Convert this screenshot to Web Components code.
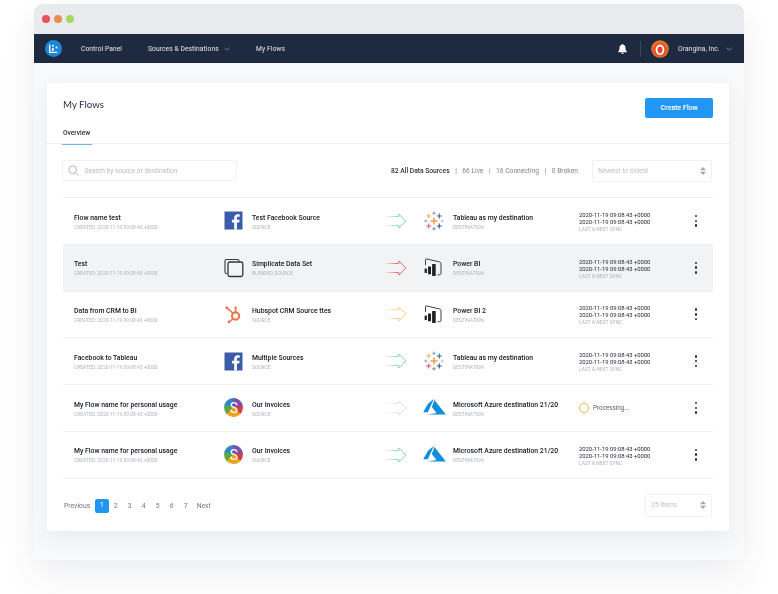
<!DOCTYPE html>
<html lang="en"><head><meta charset="utf-8"><title>My Flows</title>
<style>
html,body{margin:0;padding:0;background:#fff;height:594px;overflow:hidden}
body{font-family:Roboto,"Liberation Sans",sans-serif;color:#1d2433}
</style></head><body>
<app-window>
  <nav-bar slot="nav"></nav-bar>
  <flows-card>
    <flow-row name="Flow name test" src="fb" srcname="Test Facebook Source" srctype="SOURCE" arrow="#7fd3b4" dst="tableau" dstname="Tableau as my destination"></flow-row>
    <flow-row active name="Test" src="stack" srcname="Simplicate Data Set" srctype="BLENDED SOURCE" arrow="#e0636a" dst="pbi" dstname="Power BI"></flow-row>
    <flow-row name="Data from CRM to BI" src="hubspot" srcname="Hubspot CRM Source ttes" srctype="SOURCE" arrow="#f4cd85" dst="pbi" dstname="Power BI 2"></flow-row>
    <flow-row name="Facebook to Tableau" src="fb" srcname="Multiple Sources" srctype="SOURCE" arrow="#7fd3b4" dst="tableau" dstname="Tableau as my destination"></flow-row>
    <flow-row processing name="My Flow name for personal usage" src="simplicate" srcname="Our Invoices" srctype="SOURCE" arrow="#dcdfe3" dst="azure" dstname="Microsoft Azure destination 21/20"></flow-row>
    <flow-row name="My Flow name for personal usage" src="simplicate" srcname="Our Invoices" srctype="SOURCE" arrow="#7fd3b4" dst="azure" dstname="Microsoft Azure destination 21/20"></flow-row>
  </flows-card>
</app-window>
<script>
const ICONS={
fb:`<svg width="19" height="19" viewBox="0 0 19 19"><rect width="18" height="18" x=".5" y=".5" fill="#3b5ca8"/><path fill="#fff" d="M12.900 18.500v-7h2.300l.4-2.700h-2.700V7.100c0-.8.3-1.300 1.400-1.300h1.400V3.400c-.3 0-1.100-.1-2-.1-2.100 0-3.500 1.200-3.500 3.500v2H7.900v2.700h2.300v7z"/></svg>`,
stack:`<svg width="20" height="20" viewBox="0 0 20 20" fill="none" stroke="#33363c" stroke-width="1.100"><path d="M3 15.500H2.600A1.600 1.600 0 0 1 1 13.900V3.100A1.600 1.600 0 0 1 2.600 1.500H13.400A1.600 1.600 0 0 1 15 3.100V4"/><rect x="4" y="4" width="14.800" height="14.500" rx="1.800" stroke-width="1.300"/></svg>`,
hubspot:`<svg width="19" height="19" viewBox="0 0 19 19" fill="none" stroke="#ef7453"><circle cx="11.600" cy="11" r="3.600" stroke-width="2.100"/><path d="M11.600 7V3.500M9 8.300 3.600 3.400M9 13.800 5.600 16.500" stroke-width="1.500"/><circle cx="2.800" cy="2.800" r="1.500" fill="#ef7453" stroke="none"/><circle cx="11.600" cy="2.800" r="1.300" fill="#ef7453" stroke="none"/><circle cx="5" cy="17" r="1.400" fill="#ef7453" stroke="none"/></svg>`,
simplicate:`<div class="simp"><svg width="20" height="20" viewBox="0 0 20 20"><text x="10" y="15" text-anchor="middle" font-family="Roboto,sans-serif" font-size="14" fill="#fff">S</text></svg></div>`,
tableau:`<svg style="margin-left:1px" width="20" height="20" viewBox="0 0 20 20" fill="none" stroke-width="1.100">
<path stroke="#f19e4a" d="M10 6.500v7M6.500 10h7" stroke-width="1.500"/>
<path stroke="#f2b463" d="M4.700 2.500v5M2.200 5h5"/><path stroke="#8fa6c4" d="M10 0.500v3.500M8.250 2.250h3.500"/><path stroke="#3f6c93" d="M15.300 2.500v5M12.800 5h5"/>
<path stroke="#8aa9c9" d="M1.800 8.500v3M.3 10h3"/><path stroke="#b7c7d8" d="M18.200 8.500v3M16.700 10h3"/>
<path stroke="#e0596b" d="M4.700 12.500v5M2.200 15h5"/><path stroke="#7d8fa8" d="M10 16v3.500M8.250 17.750h3.500"/><path stroke="#2c5a8a" d="M15.300 12.500v5M12.800 15h5"/></svg>`,
pbi:`<svg style="margin-left:1px" width="19" height="19" viewBox="0 0 19 19" fill="none"><path d="M1.500 7V1.800Q1.500.6 2.700.9L15.700 4Q17 4.400 17 5.600V15.200Q17 16.800 15.300 16.800H13.500" stroke="#2b2d31" stroke-width=".9"/><rect x=".6" y="10.500" width="2.300" height="4.500" rx=".4" fill="#1f2125"/><rect x="4" y="8.500" width="3" height="7.800" rx=".4" fill="#1f2125"/><rect x="8.100" y="6" width="3.600" height="12" rx=".5" fill="#1f2125"/></svg>`,
azure:`<svg width="23" height="19" viewBox="0 0 23 19"><path fill="#0f8fdb" d="M11 .8 5 5.800.2 14.300H4.800zM11.500 2 8.800 8.900l4.700 6L4.400 16.500H22.800z"/></svg>`
};
const tpl=(html)=>{const t=document.createElement('template');t.innerHTML=html;return t};
class Base extends HTMLElement{
  mount(t){this.attachShadow({mode:'open'}).appendChild(t.content.cloneNode(true))}
}
const winT=tpl(`<style>
:host{display:block;width:710px;height:556px;margin:4px 0 0 34px;background:#f8f9fa;border-radius:9px 9px 0 0;box-shadow:0 18px 36px rgba(40,55,80,.07),0 0 30px rgba(40,55,80,.035);filter:blur(.3px)}
.bar{height:30px;background:#e9eaed;border-radius:9px 9px 0 0;display:flex;align-items:center;gap:3.500px;padding-left:7.500px;box-sizing:border-box}
.d{width:8.500px;height:8.500px;border-radius:50%}
main{display:block;padding:20px 15px 0 13px}
</style><div class="bar"><span class="d" style="background:#e9505a"></span><span class="d" style="background:#e8914f"></span><span class="d" style="background:#a7da5c"></span></div>
<slot name="nav"></slot><main><slot></slot></main>`);
customElements.define('app-window',class extends Base{constructor(){super();this.mount(winT)}});

const navT=tpl(`<style>
:host{display:flex;align-items:center;height:29px;background:#1d2a3f;color:#e6e9ee;font:400 6.700px Roboto,sans-serif;letter-spacing:.08px}
span.a,span.b,span.c,span.org{will-change:transform}
.logo{margin-left:11px;width:17px;height:17px;flex:none}
.a{margin-left:19px}.b{margin-left:26px}.c{margin-left:26px}
.chev{margin-left:5px;flex:none}
.right{margin-left:auto;display:flex;align-items:center}
.bell{flex:none;margin-right:13px}
.sep{width:1px;height:16px;background:#3d4759;margin-right:10px}
.av{width:18px;height:18px;flex:none;margin-right:9px}
.org{margin-right:0}.last{margin:0 12px 0 6px}
</style>
<svg class="logo" viewBox="0 0 17 17"><circle cx="8.500" cy="8.500" r="8.500" fill="#1d86d8"/><path d="M4.700 4.500v7.800h7.500" fill="none" stroke="#fff" stroke-width="1.300"/><rect x="6.800" y="8.200" width="2" height="2.500" fill="#fff"/><circle cx="8" cy="5.800" r="1" fill="#fff"/><circle cx="11.500" cy="7.500" r="1" fill="#fff"/></svg>
<span class="a">Control Panel</span><span class="b">Sources &amp; Destinations</span>
<svg class="chev" width="6" height="4" viewBox="0 0 6 4"><path d="M.5.700 3 3.200 5.500.700" fill="none" stroke="#9aa3b2" stroke-width=".7"/></svg>
<span class="c">My Flows</span>
<div class="right">
<svg class="bell" width="9" height="10" viewBox="0 0 9 10"><path fill="#fff" d="M4.500 0C5 0 5.300.300 5.300.8 6.800 1.200 7.500 2.300 7.500 3.800c0 2 .4 3 1.300 3.700v.8H.2v-.8c.9-.7 1.300-1.700 1.300-3.700C1.500 2.300 2.200 1.200 3.700.8 3.700.3 4 0 4.500 0zM3.200 8.800h2.600c0 .7-.6 1.200-1.300 1.200s-1.300-.5-1.300-1.200z"/></svg>
<span class="sep"></span>
<svg class="av" viewBox="0 0 18 18"><defs><radialGradient id="g" cx=".5" cy=".55" r=".55"><stop offset=".5" stop-color="#e2452a"/><stop offset="1" stop-color="#e58a1f"/></radialGradient></defs><circle cx="9" cy="9" r="8.800" fill="url(#g)"/><ellipse cx="9" cy="9.800" rx="3.500" ry="4.300" fill="none" stroke="#fff" stroke-width="1.800"/></svg>
<span class="org">Orangina, Inc.</span>
<svg class="chev last" width="6" height="4" viewBox="0 0 6 4"><path d="M.5.700 3 3.200 5.500.700" fill="none" stroke="#9aa3b2" stroke-width=".7"/></svg>
</div>`);
customElements.define('nav-bar',class extends Base{constructor(){super();this.mount(navT)}});

const cardT=tpl(`<style>
:host{display:block;height:448px;background:#fff;border-radius:2px;box-shadow:0 8px 22px rgba(40,55,80,.07);font-family:Roboto,sans-serif}
header{height:61px;box-sizing:border-box;border-bottom:1px solid #eef0f2;padding:15px 16px 0;position:relative;display:flex;justify-content:space-between;align-items:flex-start}
h1{margin:0;font:400 9.700px/13px Lato,Roboto,sans-serif;color:#2a3040;will-change:transform}
button{all:unset;box-sizing:border-box;width:68px;height:20px;background:#2196f3;border-radius:2px;color:#fff;font:500 6.800px/20px Roboto,sans-serif;text-align:center;letter-spacing:.1px}
.tab{position:absolute;left:15px;bottom:-1px;width:30px;height:15.500px;box-sizing:border-box;border-bottom:1.500px solid #6db3ee;font:500 6.600px/8px Roboto,sans-serif;color:#2a3040;padding-left:1px;will-change:transform}
.tools{display:flex;align-items:center;height:53px;padding:0 17px 0 15px;box-sizing:border-box}
.search{width:175px;height:21px;box-sizing:border-box;border:1px solid #eff1f3;border-radius:2px;display:flex;align-items:center;padding-left:5px;gap:5.500px;color:#b6bbc3;font-size:6.650px}
.stats{margin-left:auto;display:flex;gap:5.500px;font-size:6.700px;color:#7e8590;will-change:transform}
.stats b{font-weight:500;color:#2a3040}
.sel{box-sizing:border-box;border:1px solid #eff1f3;border-radius:2px;display:flex;align-items:center;justify-content:space-between;color:#bdc1c8;font-size:6.700px;padding:0 5px}
.s1{width:120px;height:22px;margin-left:14px}
.list{margin:0 16px;border-top:1px solid #eef0f2}
.pg{display:flex;align-items:center;justify-content:space-between;height:54px;padding:0 17px}
.pages{display:flex;align-items:center;color:#6f7682;font-size:6.800px;will-change:transform}
.pages span{width:14px;text-align:center}
.pages .w{width:auto;}
.pages .on{width:13.500px;height:13.500px;line-height:13.500px;background:#2196f3;color:#fff;border-radius:2px;margin:0 0 0 5px;}
.s2{width:67px;height:23px;margin-top:-1px}
</style>
<header><h1>My Flows</h1><button>Create Flow</button><div class="tab">Overview</div></header>
<div class="tools">
<div class="search"><svg width="11" height="11" viewBox="0 0 11 11" fill="none" stroke="#9ea4ad" stroke-width=".8"><circle cx="4.700" cy="4.700" r="3.800"/><path d="m7.500 7.500 3 3"/></svg><span>Search by source or destination</span></div>
<div class="stats"><b>82 All Data Sources</b><span>|</span><span>66 Live</span><span>|</span><span>16 Connecting</span><span>|</span><span>0 Broken</span></div>
<div class="sel s1"><span>Newest to oldest</span><sort-icon></sort-icon></div>
</div>
<div class="list"><slot></slot></div>
<div class="pg"><div class="pages"><span class="w">Previous</span><span class="on">1</span><span style="margin-left:0">2</span><span>3</span><span>4</span><span>5</span><span>6</span><span>7</span><span class="w" style="margin-left:4px">Next</span></div>
<div class="sel s2"><span>25 Items</span><sort-icon></sort-icon></div></div>`);
customElements.define('flows-card',class extends Base{constructor(){super();this.mount(cardT)}});

const sortT=tpl(`<style>:host{display:inline-flex}</style><svg width="6" height="8" viewBox="0 0 6 8"><path fill="#a4a9b1" d="M3 0 6 3.200H0zM3 8 0 4.800h6z"/></svg>`);
customElements.define('sort-icon',class extends Base{constructor(){super();this.mount(sortT)}});

const rowCss=`<style>
:host{display:grid;grid-template-columns:150px 160px 40px 155px 1fr 18px;align-items:center;height:46.750px;box-sizing:border-box;border-bottom:1px solid #eef0f2;padding:0 8px 0 11px;font-family:Roboto,sans-serif;color:#14181f}
:host([active]){background:#f2f3f5}
.txt{padding-top:2px;will-change:transform}
.t{font:500 6.850px/9.500px Roboto,sans-serif;white-space:nowrap}
.s{font:400 4.900px/7px Roboto,sans-serif;color:#aeb3bb;letter-spacing:.02px;white-space:nowrap}
.cell{display:flex;align-items:center}
.ic{width:28px;flex:none;display:flex;align-items:center;margin-right:0}
.ic svg{display:block}
.dst .ic{margin-left:-1px;width:30px}
.simp{width:19px;height:19px;border-radius:50%;background:conic-gradient(#7d4fa6 0 90deg,#d8412f 90deg 135deg,#f0a11e 135deg 225deg,#5aa843 225deg 285deg,#2f86c9 285deg 360deg);overflow:hidden}
.simp svg{margin:-.5px}
.sync{font:400 5.850px/7px Roboto,sans-serif;color:#262a33;white-space:nowrap;padding-top:3px;will-change:transform}
.sync .s{line-height:7px;display:block}
.proc{display:flex;align-items:center;gap:4px;color:#5c626c;font-size:6.300px;will-change:transform}
.ring{width:10px;height:10px;box-sizing:border-box;border:1.600px solid #e6b635;border-radius:50%}
.dots{display:flex;flex-direction:column;gap:2.100px;align-items:center}
.dots i{width:2.600px;height:2.600px;border-radius:50%;background:#2b2f36}
</style>`;
class FlowRow extends Base{
  connectedCallback(){
    if(this.shadowRoot)return;
    const a=n=>this.getAttribute(n)||'';
    const sync=this.hasAttribute('processing')
      ?`<div class="proc"><span class="ring"></span><span>Processing...</span></div>`
      :`<div class="sync">2020-11-19 09:08:43 +0000<br>2020-11-19 09:08:43 +0000<span class="s">LAST &amp; NEXT SYNC</span></div>`;
    const id='g'+Math.random().toString(36).slice(2);
    this.attachShadow({mode:'open'}).innerHTML=rowCss+`
    <div class="txt"><div class="t">${a('name')}</div><div class="s">CREATED: 2020-11-19 09:08:43 +0000</div></div>
    <div class="cell"><div class="ic">${ICONS[a('src')]}</div><div class="txt"><div class="t">${a('srcname')}</div><div class="s">${a('srctype')}</div></div></div>
    <svg width="24" height="18" viewBox="0 0 24 18" fill="none"><defs><linearGradient id="${id}" gradientUnits="userSpaceOnUse" x1="0" y1="0" x2="15" y2="0"><stop offset="0" stop-color="${a('arrow')}" stop-opacity="0"/><stop offset="1" stop-color="${a('arrow')}"/></linearGradient></defs><path d="M0 4.500H14.800M0 13.500H14.800" stroke="url(#${id})" stroke-width="1"/><path d="M14.800 4.500V2L21.800 9 14.800 16V13.500" stroke="${a('arrow')}" stroke-width="1" stroke-linejoin="round"/></svg>
    <div class="cell dst"><div class="ic">${ICONS[a('dst')]}</div><div class="txt"><div class="t">${a('dstname')}</div><div class="s">DESTINATION</div></div></div>
    ${sync}
    <div class="dots"><i></i><i></i><i></i></div>`;
  }
}
customElements.define('flow-row',FlowRow);
</script>
</body></html>
